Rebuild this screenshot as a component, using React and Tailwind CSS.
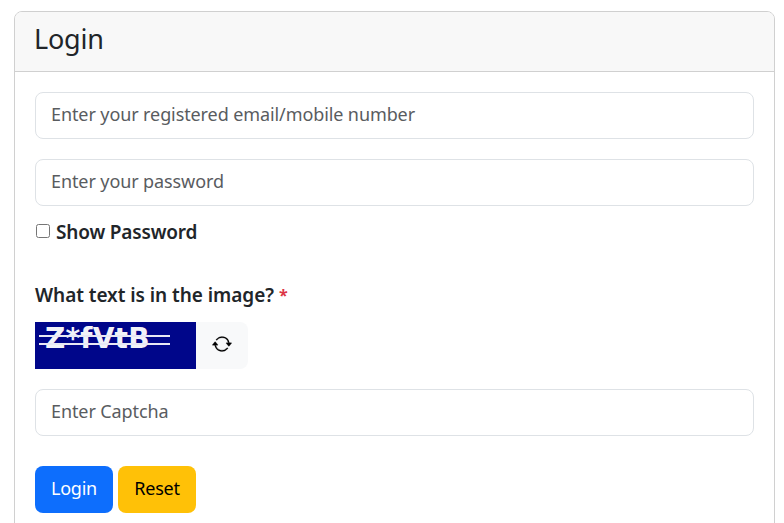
export default function App() {
  const input = "block w-full h-[47px] rounded-[8px] border border-[#dee2e6] bg-white pl-[15px] pr-[15px] pb-[4px] text-[18px] text-[#212529] placeholder:text-[#595c5f] outline-none tracking-[-0.1px]";
  return (
    <div className="h-[523px] overflow-hidden bg-white pt-[11px] pl-[14px] pr-[9px] font-['Noto_Sans',sans-serif] text-[#212529]">
      <div className="rounded-t-[8px] border border-[#d0d0d0] min-h-[600px]">
        <div className="h-[60px] rounded-t-[7px] border-b border-[#d0d0d0] bg-[#f8f8f8] pl-[20px] pb-[6px] flex items-center">
          <h1 className="text-[27px] leading-none tracking-[-0.2px] -ml-px">Login</h1>
        </div>
        <div className="px-[20px] pt-[20px]">
          <input className={input} placeholder="Enter your registered email/mobile number" />
          <input className={input + " mt-[20px]"} placeholder="Enter your password" />
          <label className="mt-[12px] flex items-center h-[28px]">
            <input type="checkbox" className="ml-[1px] w-[14px] h-[14px] mb-[3px]" />
            <span className="ml-[6px] text-[19px] font-semibold tracking-[-0.17px]">Show Password</span>
          </label>
          <div className="mt-[35px] h-[28px] flex items-center text-[19px] font-semibold tracking-[-0.05px]">
            What text is in the image?<span className="ml-[5px] text-[16px] font-bold text-[#dc3545]">*</span>
          </div>
          <div className="mt-[13px] flex h-[47px] w-[213px]">
            <div className="relative w-[161px] bg-[#00068a]">
              <span className="absolute left-[10px] top-0 text-[28px] font-bold leading-[34px] text-[#f2f2f8] tracking-[0.2px] font-['DejaVu_Sans',sans-serif]">Z*fVtB</span>
              <div className="absolute left-[4px] top-[13px] h-[1.5px] w-[131px] bg-[#e8e8f4]" />
              <div className="absolute left-[4px] top-[21px] h-[1.5px] w-[131px] bg-[#e8e8f4]" />
            </div>
            <div className="flex w-[52px] pb-[3px] items-center justify-center rounded-r-[8px] bg-[#f8f9fa]">
              <svg width="20" height="20" viewBox="0 0 16 16" fill="#000" stroke="#000" strokeWidth="0.2">
                <path d="M11.534 7h3.932a.25.25 0 0 1 .192.41l-1.966 2.36a.25.25 0 0 1-.384 0l-1.966-2.36a.25.25 0 0 1 .192-.41zm-11 2h3.932a.25.25 0 0 0 .192-.41L2.692 6.23a.25.25 0 0 0-.384 0L.342 8.59A.25.25 0 0 0 .534 9z" />
                <path fillRule="evenodd" d="M8 3c-1.552 0-2.94.707-3.857 1.818a.5.5 0 1 1-.771-.636A6.002 6.002 0 0 1 13.917 7H12.9A5.002 5.002 0 0 0 8 3zM3.1 9a5.002 5.002 0 0 0 8.757 2.182.5.5 0 1 1 .771.636A6.002 6.002 0 0 1 2.083 9H3.1z" />
              </svg>
            </div>
          </div>
          <input className={input + " mt-[20px]"} placeholder="Enter Captcha" />
          <div className="mt-[30px] flex gap-[5px]">
            <button className="h-[47px] w-[78px] pb-[2px] rounded-[8px] bg-[#0d6efd] text-[18px] tracking-[-0.25px] text-white">Login</button>
            <button className="h-[47px] w-[78px] pb-[2px] rounded-[8px] bg-[#ffc107] text-[18px] tracking-[-0.25px] text-black">Reset</button>
          </div>
        </div>
      </div>
    </div>
  );
}
